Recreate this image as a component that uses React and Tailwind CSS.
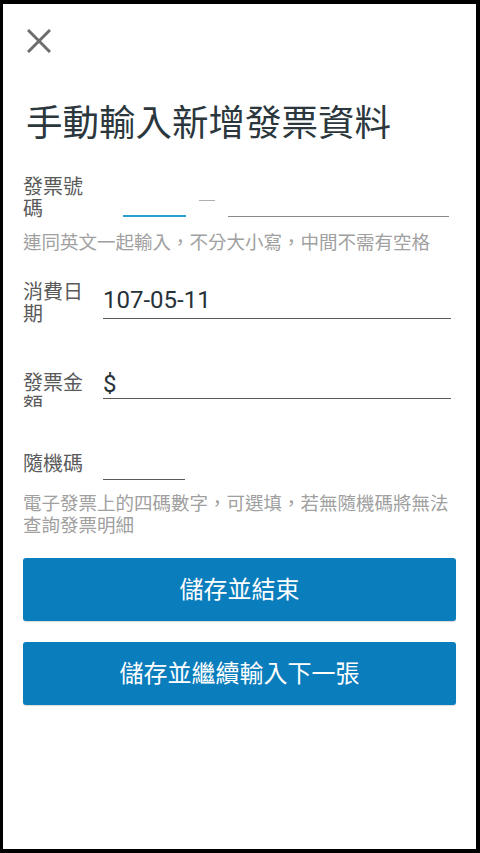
import React from 'react';

const FONT = "font-['Roboto','Noto_Sans_CJK_TC',sans-serif]";

const Field = ({ label, children, labelClass = '' }) => (
  <div className="flex items-start">
    <div className={`w-[79px] shrink-0 text-[20px] leading-[22px] text-[#5a5a5a] ${labelClass}`}>{label}</div>
    {children}
  </div>
);

export default function App() {
  return (
    <div className={`h-[853px] w-[480px] overflow-hidden border-t-4 border-r-4 border-b-4 border-l-[3px] border-black bg-white px-5 ${FONT}`}>
      <button className="ml-[4px] mt-[25px] block">
        <svg width="24" height="24" viewBox="0 0 24 24" fill="none" stroke="#6e6e6e" strokeWidth="3">
          <path d="M1 1 L23 23 M23 1 L1 23" />
        </svg>
      </button>

      <h1 className="mt-[49px] ml-[3px] text-[36.5px] leading-[44px] font-normal text-[#2b373d]">手動輸入新增發票資料</h1>

      {/* invoice number */}
      <div className="mt-[30px]">
        <Field label="發票號碼">
          <div className="flex items-end pt-[17px]">
            <div className="ml-[21px] h-[24px] w-[63px] border-b-2 border-[#2a9fd1]" />
            <span className="mx-[13px] mb-[16px] h-px w-[16px] bg-[#b0b0b0]" />
            <div className="h-[24px] w-[221px] border-b border-[#8a8a8a]" />
          </div>
        </Field>
        <p className="mt-[12px] text-[18.5px] leading-[22px] text-[#a0a0a0]">連同英文一起輸入，不分大小寫，中間不需有空格</p>
      </div>

      {/* date */}
      <div className="mt-[27px]">
        <Field label="消費日期">
          <div className="ml-px w-[348px] border-b border-[#5a5a5a] pb-[3px] pt-[4px] text-[24px] leading-[30px] text-[#263238]">107-05-11</div>
        </Field>
      </div>

      {/* amount */}
      <div className="mt-[47px]">
        <Field label="發票金額" labelClass="h-[35px] overflow-hidden">
          <div className="ml-px flex w-[348px] items-end border-b border-[#5a5a5a] pb-[2px] text-[24px] leading-[24px] text-[#263238]">$</div>
        </Field>
      </div>

      {/* random code */}
      <div className="mt-[46px]">
        <Field label="隨機碼">
          <div className="ml-px mt-[3px] h-[24px] w-[82px] border-b border-[#5a5a5a]" />
        </Field>
        <p className="mt-[13px] text-[18.5px] leading-[22px] text-[#a0a0a0]">電子發票上的四碼數字，可選填，若無隨機碼將無法查詢發票明細</p>
      </div>

      <div className="mt-[21px] flex flex-col gap-[21px]">
        <button className="h-[63px] w-full rounded-[3px] bg-[#0a7dbd] text-[24px] text-white shadow-[0_1px_1px_rgba(0,0,0,0.15)]">儲存並結束</button>
        <button className="h-[63px] w-full rounded-[3px] bg-[#0a7dbd] text-[24px] text-white shadow-[0_1px_1px_rgba(0,0,0,0.15)]">儲存並繼續輸入下一張</button>
      </div>
    </div>
  );
}
